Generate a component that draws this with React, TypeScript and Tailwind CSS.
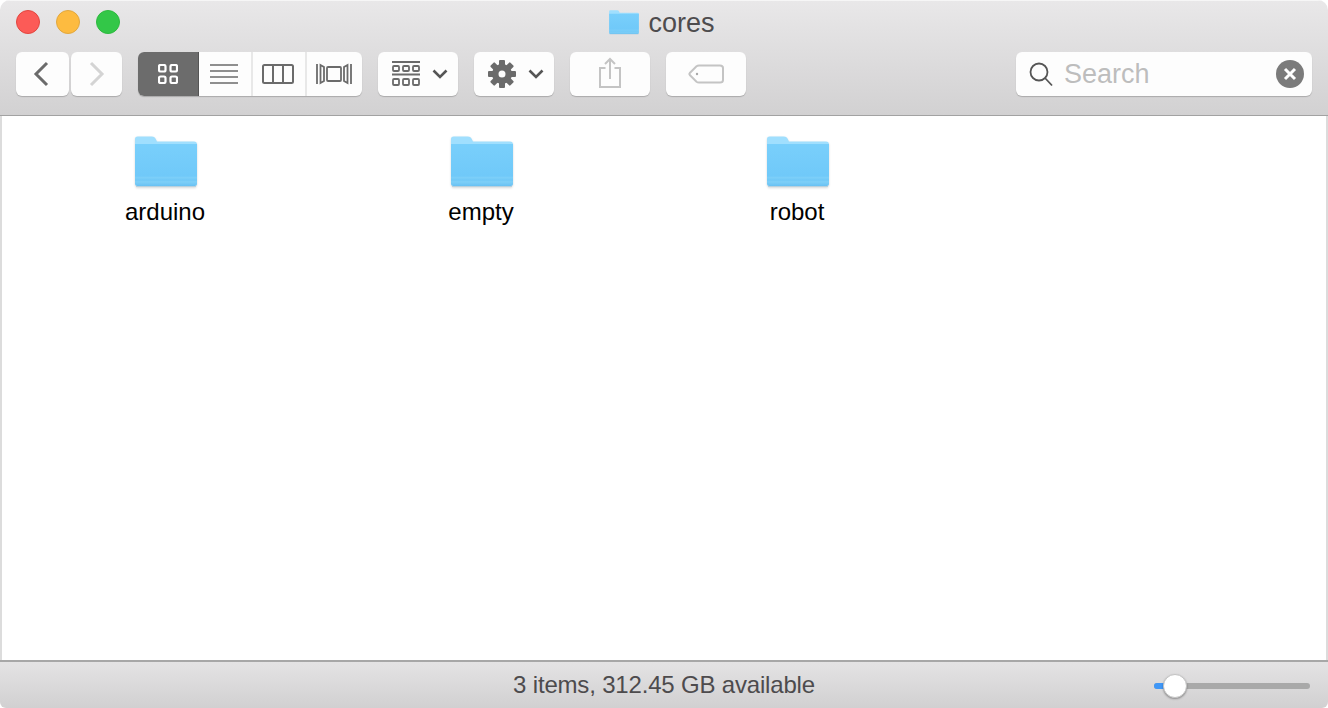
import React from "react";

function Folder({ w, h }: { w: number; h: number }) {
  const id = `f${w}`;
  return (
    <svg width={w} height={h} viewBox="0 0 62 52" className="block">
      <defs>
        <linearGradient id={id} x1="0" y1="0" x2="0" y2="1">
          <stop offset="0" stopColor="#79cffb" />
          <stop offset="0.76" stopColor="#70c9f9" />
          <stop offset="0.8" stopColor="#7ccff9" />
          <stop offset="0.86" stopColor="#70c8f7" />
          <stop offset="0.9" stopColor="#7ecff8" />
          <stop offset="1" stopColor="#68c1f3" />
        </linearGradient>
      </defs>
      <path d="M0 3Q0 0.500 2.500 0.500H17Q19.500 0.500 20.500 2.500L22 5.500H59Q62 5.500 62 8.500V12H0Z" fill="#a0dffe" />
      <path d="M0 8H62V47.500Q62 50 59.500 50H2.500Q0 50 0 47.500Z" fill={`url(#${id})`} />
      <path d="M1 50.600H61" stroke="#b5cfdd" strokeWidth="1" />
    </svg>
  );
}

function Btn({ className, children }: { className: string; children?: React.ReactNode }) {
  return (
    <div className={`flex h-11 items-center justify-center rounded-[6px] bg-[#fdfdfd] shadow-[0_1px_1px_rgba(0,0,0,0.2)] ${className}`}>
      {children}
    </div>
  );
}

function Chevron() {
  return (
    <svg width="16" height="10" viewBox="0 0 16 10" fill="none" stroke="#555" strokeWidth="2.600">
      <path d="M1.500 1.500L8 8L14.500 1.500" />
    </svg>
  );
}

function Gear() {
  const teeth = [0, 45, 90, 135, 180, 225, 270, 315];
  return (
    <svg width="28" height="28" viewBox="0 0 28 28" fill="#6b6b6b">
      {teeth.map((a) => (
        <rect key={a} x="11" y="0" width="6" height="7" rx="1" transform={`rotate(${a} 14 14)`} />
      ))}
      <path fillRule="evenodd" d="M14 4a10 10 0 1 0 0 20a10 10 0 1 0 0-20ZM14 10.500a3.500 3.500 0 1 1 0 7a3.500 3.500 0 1 1 0-7Z" />
    </svg>
  );
}

export default function App() {
  const items = ["arduino", "empty", "robot"];
  return (
    <div className="flex h-[708px] w-[1328px] flex-col overflow-hidden rounded-t-[10px] rounded-b-[6px] bg-white font-['Liberation_Sans',sans-serif]">
      <header className="flex h-[116px] shrink-0 flex-col border-b border-[#a2a2a2] bg-gradient-to-b from-[#e9e8e9] to-[#d2d1d2] shadow-[inset_0_1px_0_#f6f6f6]">
        <div className="relative flex h-[52px] shrink-0 items-center justify-center">
          <div className="absolute left-4 top-[10px] flex gap-4">
            <span className="h-6 w-6 rounded-full border border-[#e2463f] bg-[#fc5b57]" />
            <span className="h-6 w-6 rounded-full border border-[#e1a73e] bg-[#fdbb40]" />
            <span className="h-6 w-6 rounded-full border border-[#2eb93f] bg-[#33c748]" />
          </div>
          <div className="mb-[7px] ml-[-4px] flex items-center gap-[9px]">
            <Folder w={30} h={25} />
            <span className="text-[27px] leading-[30px] text-[#4e4c4e]">cores</span>
          </div>
        </div>
        <div className="flex items-start pl-4 pr-4">
          <Btn className="w-[53px] pr-1">
            <svg width="18" height="26" viewBox="0 0 18 26" fill="none" stroke="#6b6b6b" strokeWidth="3">
              <path d="M15 2L4 13L15 24" />
            </svg>
          </Btn>
          <Btn className="ml-[2px] w-[51px]">
            <svg width="18" height="26" viewBox="0 0 18 26" fill="none" stroke="#d4d4d4" strokeWidth="3">
              <path d="M3 2L14 13L3 24" />
            </svg>
          </Btn>
          <div className="ml-4 flex h-11 w-[224px] overflow-hidden rounded-[6px] bg-[#fdfdfd] shadow-[0_1px_1px_rgba(0,0,0,0.2)]">
            <div className="flex w-[61px] items-center justify-center border-r border-[#555] bg-[#6c6c6c]">
              <svg width="20" height="20" viewBox="0 0 20 20" fill="none" stroke="#fff" strokeWidth="2.200">
                <rect x="1" y="1" width="6.500" height="6.500" rx="1.500" />
                <rect x="12.500" y="1" width="6.500" height="6.500" rx="1.500" />
                <rect x="1" y="12.500" width="6.500" height="6.500" rx="1.500" />
                <rect x="12.500" y="12.500" width="6.500" height="6.500" rx="1.500" />
              </svg>
            </div>
            <div className="flex w-[54px] items-center justify-center border-r-2 border-[#e8e8e8] pr-[2px]">
              <svg width="28" height="20" viewBox="0 0 28 20" stroke="#6b6b6b" strokeWidth="1.600">
                <path d="M0 1H28M0 7H28M0 13H28M0 19H28" />
              </svg>
            </div>
            <div className="flex w-[54px] items-center justify-center border-r-2 border-[#e8e8e8] pr-[2px]">
              <svg width="32" height="20" viewBox="0 0 32 20" fill="none" stroke="#6b6b6b" strokeWidth="2">
                <rect x="1" y="1" width="30" height="18" rx="1.500" />
                <path d="M11 1V19M21 1V19" />
              </svg>
            </div>
            <div className="flex flex-1 items-center justify-center pr-[2px]">
              <svg width="36" height="22" viewBox="0 0 36 22" fill="none" stroke="#6b6b6b" strokeWidth="1.800">
                <path d="M1 1V21M4.500 2V20L8 18V4Z" />
                <rect x="11" y="4" width="14" height="14" rx="1" />
                <path d="M35 1V21M31.500 2V20L28 18V4Z" />
              </svg>
            </div>
          </div>
          <Btn className="ml-4 w-[80px] gap-[12px] pl-[4px]">
            <svg width="28" height="26" viewBox="0 0 28 26" fill="none" stroke="#6b6b6b" strokeWidth="1.800">
              <path d="M0 1H28M0 13.500H28" />
              <rect x="1" y="5" width="6" height="5" rx="1" />
              <rect x="11" y="5" width="6" height="5" rx="1" />
              <rect x="21" y="5" width="6" height="5" rx="1" />
              <rect x="1" y="18" width="6" height="6" rx="1" />
              <rect x="11" y="18" width="6" height="6" rx="1" />
              <rect x="21" y="18" width="6" height="6" rx="1" />
            </svg>
            <Chevron />
          </Btn>
          <Btn className="ml-4 w-[80px] gap-[12px] pl-[4px]">
            <Gear />
            <Chevron />
          </Btn>
          <Btn className="ml-4 w-[80px]">
            <svg width="24" height="32" viewBox="0 0 24 32" fill="none" stroke="#c4c4c4" strokeWidth="2" className="mb-[3px]">
              <path d="M7.500 11H2V30H22V11H16.500" />
              <path d="M12 22V2M7 7L12 2L17 7" />
            </svg>
          </Btn>
          <Btn className="ml-4 w-[80px]">
            <svg width="36" height="20" viewBox="0 0 36 20" fill="none" stroke="#c4c4c4" strokeWidth="2">
              <path d="M11 1.500H32Q35 1.500 35 4V16Q35 18.500 32 18.500H11Q9.500 18.500 8.500 17.800L1.800 11Q1 10 1.800 9L8.500 2.200Q9.500 1.500 11 1.500Z" />
              <circle cx="9" cy="10" r="1.200" fill="#a8a8a8" stroke="none" />
            </svg>
          </Btn>
          <Btn className="ml-auto w-[296px] justify-start pl-[13px] pr-2">
            <svg width="24" height="25" viewBox="0 0 24 25" fill="none" stroke="#555" strokeWidth="1.800">
              <circle cx="10" cy="10" r="8.500" />
              <path d="M16 16L23 23.500" />
            </svg>
            <span className="ml-[11px] text-[27px] leading-none text-[#bdbdbd]">Search</span>
            <span className="ml-auto flex h-7 w-7 items-center justify-center rounded-full bg-[#7b7b7b]">
              <svg width="14" height="14" viewBox="0 0 14 14" stroke="#fff" strokeWidth="3">
                <path d="M2 2L12 12M12 2L2 12" />
              </svg>
            </span>
          </Btn>
        </div>
      </header>

      <main className="min-h-0 flex-1 border-x-2 border-[#dcdcdc] bg-white pl-[5px] pt-5">
        <div className="grid grid-cols-[repeat(3,316px)]">
          {items.map((name) => (
            <div key={name} className="flex flex-col items-center">
              <div className="ml-[2px] drop-shadow-[0_1px_1px_rgba(0,0,0,0.15)]">
                <Folder w={62} h={52} />
              </div>
              <span className="mt-[10px] text-2xl leading-7 text-black">{name}</span>
            </div>
          ))}
        </div>
      </main>

      <footer className="relative flex h-[48px] shrink-0 items-center justify-center border-t-2 border-[#a7a7a7] bg-gradient-to-b from-[#e4e3e4] to-[#d1d0d1]">
        <span className="text-2xl leading-7 tracking-[-0.18px] text-[#4d4b4d]">3 items, 312.45 GB available</span>
        <div className="absolute left-[1154px] top-[21px] h-[6px] w-[156px] rounded-full bg-[#a9a9a9]">
          <div className="h-full w-6 rounded-l-full bg-[#3f97f7]" />
          <div className="absolute left-[9px] top-[-9px] h-6 w-6 rounded-full border border-[#c4c4c4] bg-white shadow-[0_1px_2px_rgba(0,0,0,0.35)]" />
        </div>
      </footer>
    </div>
  );
}
